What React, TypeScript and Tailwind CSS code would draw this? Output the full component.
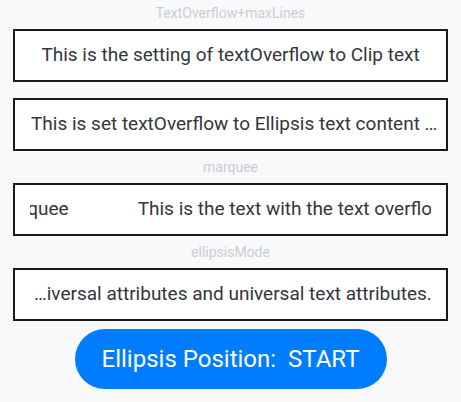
import * as React from 'react'

function Label({ children }: { children: React.ReactNode }): React.ReactElement {
  return (
    <div className="flex h-[16px] items-center justify-center text-[14px] leading-none text-[#cbcdd1]">
      {children}
    </div>
  )
}

function Box({
  children,
  className = '',
}: {
  children: React.ReactNode
  className?: string
}): React.ReactElement {
  return (
    <div
      className={`mx-[13px] flex h-[53px] items-center overflow-hidden whitespace-nowrap border-2 border-[#1a1a1a] bg-white text-[19px] text-[#33363c] ${className}`}
    >
      {children}
    </div>
  )
}

export default function App(): React.ReactElement {
  return (
    <div
      className="flex h-[402px] w-[461px] flex-col bg-[#f8f9fb] pt-[5px]"
      style={{ fontFamily: 'Roboto, "Noto Sans", sans-serif' }}
    >
      <Label>TextOverflow+maxLines</Label>
      <div className="h-[8px]" />
      <Box className="justify-center">This is the setting of textOverflow to Clip text</Box>
      <div className="h-[16px]" />
      <Box className="px-[16px]">
        <span>This is set textOverflow to Ellipsis text content …</span>
      </Box>
      <div className="h-[8px]" />
      <Label>marquee</Label>
      <div className="h-[8px]" />
      <Box className="px-[15px]">
        <div className="flex min-w-0 flex-1 overflow-hidden">
          <span className="ml-[-9px] shrink-0">rquee</span>
          <span className="ml-[69px] shrink-0">This is the text with the text overflow set marquee</span>
        </div>
      </Box>
      <div className="h-[8px]" />
      <Label>ellipsisMode</Label>
      <div className="h-[8px]" />
      <Box className="px-[19px]">
        <span>…iversal attributes and universal text attributes.</span>
      </Box>
      <div className="h-[8px]" />
      <div className="flex justify-center">
        <button className="flex h-[60px] w-[312px] items-center justify-center rounded-full bg-[#007dff] text-[24px] text-white">
          Ellipsis Position:&nbsp;&nbsp;START
        </button>
      </div>
    </div>
  )
}
